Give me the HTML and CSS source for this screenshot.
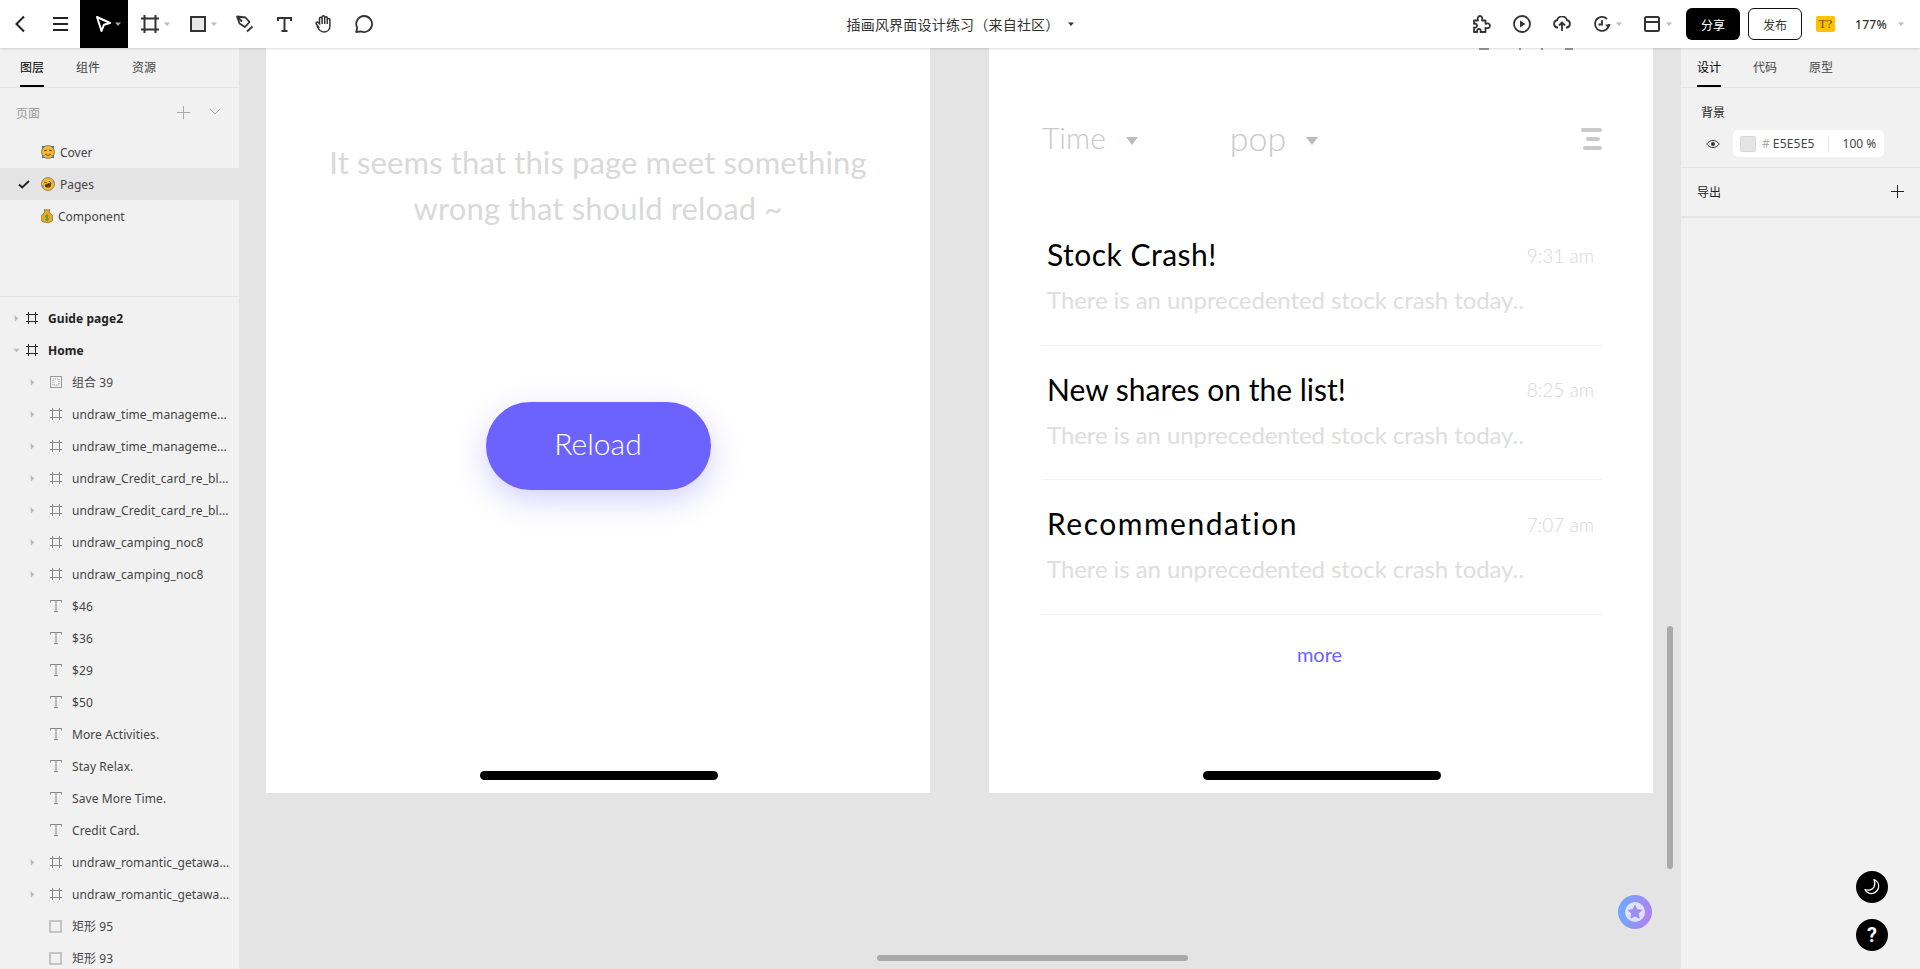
FILE: index.html
```html
<!DOCTYPE html>
<html lang="zh-CN">
<head>
<meta charset="utf-8">
<title>插画风界面设计练习</title>
<link rel="stylesheet" href="styles.css">
</head>
<body>
<svg class="defs" width="0" height="0" aria-hidden="true">
  <symbol id="frame" viewBox="0 0 12 12"><path d="M2.5 0v12M9.5 0v12M0 2.5h12M0 9.5h12" fill="none" stroke="currentColor"/></symbol>
  <symbol id="text" viewBox="0 0 12 12"><path d="M.5 2.5V.5h11v2M6 .5v11M4 11.5h4" fill="none" stroke="currentColor"/></symbol>
  <symbol id="caret" viewBox="0 0 6 6"><path d="M0 1.5h6L3 5z" fill="currentColor"/></symbol>
  <symbol id="arrow" viewBox="0 0 6 8"><path d="M1 0l4 4-4 4z" fill="currentColor"/></symbol>
</svg>
<div class="app">
  <header class="topbar">
    <div class="tools">
      <button class="tool back"><svg width="12" height="18" viewBox="0 0 12 18"><path d="M10 1.500L2.500 9l7.500 7.500" fill="none" stroke="#222" stroke-width="2"/></svg></button>
      <button class="tool menu"><svg width="15" height="14" viewBox="0 0 15 14"><path d="M0 1h15M0 7h15M0 13h15" stroke="#222" stroke-width="2"/></svg></button>
      <button class="tool select"><svg width="17" height="18" viewBox="0 0 17 18"><path d="M2 2l13 6-6 1.700L6.500 16z" fill="none" stroke="#fff" stroke-width="2" stroke-linejoin="round"/></svg><svg class="cr" width="6" height="6"><use href="#caret"/></svg></button>
      <button class="tool frame"><svg width="18" height="18" viewBox="0 0 18 18"><path d="M3.500 0v18M14.500 0v18M0 3.500h18M0 14.500h18" fill="none" stroke="#333" stroke-width="2"/></svg><svg class="cr" width="6" height="6"><use href="#caret"/></svg></button>
      <button class="tool rect"><svg width="16" height="16" viewBox="0 0 16 16"><rect x="1" y="1" width="14" height="14" fill="#e8e8e8" stroke="#333" stroke-width="2"/></svg><svg class="cr" width="6" height="6"><use href="#caret"/></svg></button>
      <button class="tool pen"><svg width="18" height="18" viewBox="0 0 18 18"><path d="M1 1.500l8.500 1 4 4.500-4.500 5-5.500-3.500zM1 1.500l5 5M11 16.500l5.500-5" fill="none" stroke="#333" stroke-width="1.800" stroke-linejoin="round"/></svg></button>
      <button class="tool type"><svg width="15" height="15" viewBox="0 0 15 15"><path d="M1 4V1h13v3M7.500 1v13M4.500 14h6" fill="none" stroke="#333" stroke-width="2"/></svg></button>
      <button class="tool hand"><svg width="18" height="18" viewBox="0 0 18 18"><path d="M3.500 12L1.300 9C.5 7.800 2 6.500 3.200 7.500L4.500 8.800V3.500c0-1.600 2.600-1.600 2.600 0V2c0-1.600 2.600-1.600 2.600 0v1c0-1.600 2.600-1.600 2.600 0v1.500c0-1.500 2.600-1.500 2.600 0V11c0 3.500-2.500 6-6 6-2.500 0-4.500-1.500-6.400-5zM7.100 3.500V9M9.700 2v7M12.300 3v6" fill="none" stroke="#333" stroke-width="1.500"/></svg></button>
      <button class="tool comment"><svg width="18" height="18" viewBox="0 0 18 18"><path d="M9 1a8 8 0 1 1-3 15.400L1.200 17l1-4.300A8 8 0 0 1 9 1z" fill="none" stroke="#333" stroke-width="1.800" stroke-linejoin="round"/></svg></button>
    </div>
    <div class="doc-title"><span>插画风界面设计练习（来自社区）</span><svg width="6" height="6"><use href="#caret"/></svg></div>
    <div class="actions">
      <svg class="act" width="18" height="18" viewBox="0 0 18 18"><path d="M1 5.500h4C4 2.500 5.500 1 7 1s3 1.500 2 4.500h3.500v3.300c2.500-1 4.500 0 4.500 2s-2 3-4.500 2V17H7.500c.8-2-.3-3-1.500-3s-2.500 1-1.700 3H1v-4.500c2 .5 3-.5 3-1.800S3 8 1 8.800z" fill="none" stroke="#333" stroke-width="1.800" stroke-linejoin="round"/></svg>
      <svg class="act" width="18" height="18" viewBox="0 0 18 18"><circle cx="9" cy="9" r="8" fill="none" stroke="#333" stroke-width="1.800"/><path d="M7 5.500l5.500 3.500L7 12.500z" fill="#333"/></svg>
      <svg class="act" width="18" height="16" viewBox="0 0 18 16"><path d="M5 11.500H4.500a3.700 3.700 0 0 1-.5-7.300 5.200 5.200 0 0 1 10 0 3.700 3.700 0 0 1-.5 7.300H13M9 15V7M6 9.500L9 6.500l3 3" fill="none" stroke="#333" stroke-width="1.800"/></svg>
      <span class="act-group"><svg width="18" height="18" viewBox="0 0 18 18"><path d="M16 9a7 7 0 1 1-2-5M9 5v4.500H5.500" fill="none" stroke="#333" stroke-width="1.800"/><path d="M12 9.500h6L15 13z" fill="#333"/></svg><svg class="cr" width="6" height="6"><use href="#caret"/></svg></span>
      <span class="act-group layout"><svg width="16" height="16" viewBox="0 0 16 16"><rect x="1" y="1" width="14" height="14" rx="1.500" fill="none" stroke="#333" stroke-width="2"/><path d="M1 6h14" stroke="#333" stroke-width="2"/></svg><svg class="cr" width="6" height="6"><use href="#caret"/></svg></span>
      <button class="btn-share">分享</button>
      <button class="btn-publish">发布</button>
      <span class="t-badge">T?</span>
      <span class="zoom-val">177%</span>
      <svg class="zoom-caret" width="6" height="6"><use href="#caret"/></svg>
    </div>
  </header>

  <div class="workspace">
    <aside class="left">
      <nav class="tabs"><span class="tab on">图层</span><span class="tab">组件</span><span class="tab">资源</span></nav>
      <div class="pages-head">
        <span>页面</span>
        <svg class="p-plus" width="13" height="13" viewBox="0 0 13 13"><path d="M6.500 0v13M0 6.500h13" stroke="#aaa"/></svg>
        <svg class="p-chev" width="12" height="7" viewBox="0 0 12 7"><path d="M1 1l5 5 5-5" fill="none" stroke="#aaa"/></svg>
      </div>
      <ul class="pages">
        <li class="page"><svg class="emoji" width="14" height="14" viewBox="0 0 14 14"><rect x="1" y="1" width="12" height="12" fill="#3b82c4"/><circle cx="7" cy="7" r="6.500" fill="#f5b82e" stroke="#555" stroke-width=".6"/><path d="M3 6l3-1M8 5l3 1M4 9q3 3 6 0" stroke="#6b4a12" fill="none"/></svg><span>Cover</span></li>
        <li class="page cur"><svg class="check" width="12" height="9" viewBox="0 0 12 9"><path d="M1 4.500L4.200 7.500 11 1" fill="none" stroke="#222" stroke-width="1.800"/></svg><svg class="emoji" width="14" height="14" viewBox="0 0 14 14"><circle cx="7" cy="7" r="6.500" fill="#f5b82e" stroke="#555" stroke-width=".6"/><path d="M3 5l3 1M8 4l2 2M4 8l6-2-1 4-4 0z" stroke="#5a3d0c" fill="#5a3d0c" stroke-width=".8"/><path d="M1 8l2 2M12 4l1 2" stroke="#3b9be0"/></svg><span>Pages</span></li>
        <li class="page comp"><svg class="emoji" width="12" height="14" viewBox="0 0 12 14"><path d="M4 3L3 .8h6L8 3c3 2 4 4 4 6.500 0 3-2.500 4-6 4s-6-1-6-4C0 7 1 5 4 3z" fill="#e7a92a" stroke="#66511b" stroke-width=".6"/><path d="M6 5.500v6M7.500 7c-1-.8-3-.5-3 .8s3 .7 3 2-2 1.500-3 .7" stroke="#2c9a3c" fill="none"/></svg><span>Component</span></li>
      </ul>
      <ul class="layers">
        <li class="layer top"><svg class="arr" width="5" height="7"><use href="#arrow"/></svg><svg class="ic" width="12" height="12"><use href="#frame"/></svg><span>Guide page2</span></li>
        <li class="layer top"><svg class="arr down" width="5" height="7"><use href="#arrow"/></svg><svg class="ic" width="12" height="12"><use href="#frame"/></svg><span>Home</span></li>
        <li class="layer"><svg class="arr" width="5" height="7"><use href="#arrow"/></svg><svg class="ic" width="12" height="12" viewBox="0 0 12 12"><rect x=".5" y=".5" width="11" height="11" fill="none" stroke="#999"/><rect x="3" y="3" width="6" height="6" fill="none" stroke="#999" stroke-dasharray="1 1"/></svg><span>组合 39</span></li>
        <li class="layer"><svg class="arr" width="5" height="7"><use href="#arrow"/></svg><svg class="ic" width="12" height="12"><use href="#frame"/></svg><span>undraw_time_manageme...</span></li>
        <li class="layer"><svg class="arr" width="5" height="7"><use href="#arrow"/></svg><svg class="ic" width="12" height="12"><use href="#frame"/></svg><span>undraw_time_manageme...</span></li>
        <li class="layer"><svg class="arr" width="5" height="7"><use href="#arrow"/></svg><svg class="ic" width="12" height="12"><use href="#frame"/></svg><span>undraw_Credit_card_re_bl...</span></li>
        <li class="layer"><svg class="arr" width="5" height="7"><use href="#arrow"/></svg><svg class="ic" width="12" height="12"><use href="#frame"/></svg><span>undraw_Credit_card_re_bl...</span></li>
        <li class="layer"><svg class="arr" width="5" height="7"><use href="#arrow"/></svg><svg class="ic" width="12" height="12"><use href="#frame"/></svg><span>undraw_camping_noc8</span></li>
        <li class="layer"><svg class="arr" width="5" height="7"><use href="#arrow"/></svg><svg class="ic" width="12" height="12"><use href="#frame"/></svg><span>undraw_camping_noc8</span></li>
        <li class="layer"><i class="arr"></i><svg class="ic" width="12" height="12"><use href="#text"/></svg><span>$46</span></li>
        <li class="layer"><i class="arr"></i><svg class="ic" width="12" height="12"><use href="#text"/></svg><span>$36</span></li>
        <li class="layer"><i class="arr"></i><svg class="ic" width="12" height="12"><use href="#text"/></svg><span>$29</span></li>
        <li class="layer"><i class="arr"></i><svg class="ic" width="12" height="12"><use href="#text"/></svg><span>$50</span></li>
        <li class="layer"><i class="arr"></i><svg class="ic" width="12" height="12"><use href="#text"/></svg><span>More Activities.</span></li>
        <li class="layer"><i class="arr"></i><svg class="ic" width="12" height="12"><use href="#text"/></svg><span>Stay Relax.</span></li>
        <li class="layer"><i class="arr"></i><svg class="ic" width="12" height="12"><use href="#text"/></svg><span>Save More Time.</span></li>
        <li class="layer"><i class="arr"></i><svg class="ic" width="12" height="12"><use href="#text"/></svg><span>Credit Card.</span></li>
        <li class="layer"><svg class="arr" width="5" height="7"><use href="#arrow"/></svg><svg class="ic" width="12" height="12"><use href="#frame"/></svg><span>undraw_romantic_getawa...</span></li>
        <li class="layer"><svg class="arr" width="5" height="7"><use href="#arrow"/></svg><svg class="ic" width="12" height="12"><use href="#frame"/></svg><span>undraw_romantic_getawa...</span></li>
        <li class="layer"><i class="arr"></i><i class="ic box"></i><span>矩形 95</span></li>
        <li class="layer"><i class="arr"></i><i class="ic box"></i><span>矩形 93</span></li>
      </ul>
    </aside>

    <main class="canvas">
      <section class="board">
        <p class="err">It seems that this page meet something<br>wrong that should reload ~</p>
        <button class="reload">Reload</button>
        <div class="home-bar"></div>
      </section>
      <section class="board news">
        <div class="status-bits"><i></i><i></i><i></i><i></i></div>
        <div class="filters">
          <span class="f-time">Time</span><i class="tri"></i>
          <span class="f-pop">pop</span><i class="tri"></i>
          <span class="f-menu"><i></i><i></i><i></i></span>
        </div>
        <ul class="feed">
          <li class="item"><div class="item-top"><h3 class="t-stock">Stock Crash!</h3><time>9:31 am</time></div><p>There is an unprecedented stock crash today..</p></li>
          <li class="item"><div class="item-top"><h3>New shares on the list!</h3><time>8:25 am</time></div><p>There is an unprecedented stock crash today..</p></li>
          <li class="item"><div class="item-top"><h3 class="t-rec">Recommendation</h3><time>7:07 am</time></div><p>There is an unprecedented stock crash today..</p></li>
        </ul>
        <a class="more">more</a>
        <div class="home-bar"></div>
      </section>
      <div class="vscroll"></div>
      <div class="hscroll"></div>
      <div class="star"><svg width="20" height="20" viewBox="0 0 20 20"><circle cx="10" cy="10" r="10" fill="#fff" fill-opacity=".72"/><path d="M10 3.500l2 4.200 4.600.6-3.300 3.200.8 4.600L10 13.900l-4.100 2.200.8-4.600L3.400 8.300 8 7.700z" fill="#9b8cf8" stroke="#9b8cf8" stroke-linejoin="round"/></svg></div>
    </main>

    <aside class="right">
      <nav class="tabs rtabs"><span class="tab on">设计</span><span class="tab">代码</span><span class="tab">原型</span></nav>
      <section class="bg-sec">
        <h4>背景</h4>
        <div class="fill-row">
          <svg width="14" height="10" viewBox="0 0 14 10"><path d="M.7 5C4 .3 10 .3 13.300 5 10 9.700 4 9.700 .7 5z" fill="none" stroke="#333"/><circle cx="7" cy="5" r="2" fill="#333"/></svg>
          <div class="fill-input">
            <i class="swatch"></i><span class="hash">#</span><span class="hex">E5E5E5</span><i class="sep"></i><span class="pct">100 %</span>
          </div>
        </div>
      </section>
      <section class="export">
        <h4>导出</h4>
        <svg width="13" height="13" viewBox="0 0 13 13"><path d="M6.500 0v13M0 6.500h13" stroke="#222"/></svg>
      </section>
      <div class="fab-stack">
        <button class="fab"><svg width="18" height="18" viewBox="0 0 18 18"><path d="M11 1.500c3.500 1.500 5.500 5 4.500 8.500-1.200 4-5.500 6.500-9.500 5.200-2-.7-3.500-2-4-3.700 3.500 1.500 7.500.3 9-2.500 1.200-2.500 1-5.200 0-7.500z" fill="none" stroke="#fff" stroke-width="1.300" stroke-linejoin="round"/></svg></button>
        <button class="fab q">?</button>
      </div>
    </aside>
  </div>
</div>
</body>
</html>
```

FILE: styles.css
```css
* { box-sizing: border-box; }
html, body { margin: 0; height: 100%; overflow: hidden; }
body { font-family: "Noto Sans", "Noto Sans CJK SC", sans-serif; font-size: 12px; color: #333; }
ul { list-style: none; margin: 0; padding: 0; }
h3, h4, p { margin: 0; font-weight: 400; }
button { border: 0; background: none; padding: 0; font: inherit; }
.defs { position: absolute; }
.app { display: flex; flex-direction: column; height: 969px; width: 1920px; }

.topbar { position: relative; z-index: 2; flex: 0 0 48px; display: grid; grid-template-columns: 1fr auto 1fr; align-items: center; background: #fff; box-shadow: 0 1px 2px rgba(0,0,0,.14); }
.tools { display: flex; align-items: center; height: 48px; }
.tool { display: flex; align-items: center; height: 48px; color: #c4c4c4; flex: none; }
.cr { margin-left: 5px; color: #bbb; }
.back { padding-left: 14px; width: 53px; }
.menu { width: 27px; }
.select { width: 48px; background: #000; padding-left: 15px; }
.select .cr { margin-left: 3px; color: #aaa; }
.frame { margin-left: 13px; width: 49px; }
.rect { width: 46px; }
.pen { width: 41px; }
.type { width: 38px; }
.hand { width: 40px; }
.doc-title { display: flex; align-items: center; gap: 8px; color: #333; font-family: "Noto Sans CJK SC", sans-serif; font-size: 14px; letter-spacing: .2px; }
.actions { display: flex; align-items: center; justify-content: flex-end; }
.actions .act { margin-right: 22px; flex: none; }
.act-group { display: flex; align-items: center; margin-right: 22px; color: #bbb; }
.act-group.layout { margin-right: 14px; }
.act-group.layout .cr { margin-left: 6px; }
.btn-share, .btn-publish { width: 54px; height: 32px; border-radius: 6px; font-family: "Noto Sans CJK SC", sans-serif; font-size: 12px; }
.btn-share { background: #000; color: #fff; }
.btn-publish { margin-left: 8px; border: 1px solid #111; color: #333; }
.t-badge { margin-left: 14px; width: 19px; height: 16px; border-radius: 2px; background: #fdc100; color: #6b5200; font: 13px/16px "Liberation Serif", serif; text-align: center; }
.zoom-val { margin-left: 20px; color: #333; font-size: 12px; font-weight: 500; letter-spacing: .3px; }
.zoom-caret { margin: 0 16px 0 11px; color: #bbb; }

.workspace { flex: 1; display: flex; min-height: 0; }
.left, .right { flex: none; background: #f1f1f1; overflow: hidden; }
.left { width: 239px; }
.right { position: relative; width: 239px; }
.tabs { display: flex; gap: 32px; height: 40px; padding: 0 20px; border-bottom: 1px solid #e3e3e3; font-family: "Noto Sans CJK SC", sans-serif; }
.tab { position: relative; height: 39px; line-height: 37px; color: #444; width: 24px; white-space: nowrap; }
.tab.on { color: #000; border-bottom: 2px solid #000; }
.rtabs { padding-left: 16px; }
.pages-head { position: relative; display: flex; align-items: center; height: 48px; padding: 0 16px; color: #999; font-family: "Noto Sans CJK SC", sans-serif; }
.p-plus { position: absolute; left: 177px; top: 18px; }
.p-chev { position: absolute; left: 209px; top: 20px; }
.pages { height: 161px; border-bottom: 1px solid #e3e3e3; }
.page { position: relative; display: flex; align-items: center; height: 32px; padding-left: 41px; color: #444; }
.page span { margin-left: 5px; }
.page.cur { background: #e4e4e4; }
.check { position: absolute; left: 18px; top: 12px; }
.layers { padding-top: 5px; }
.layer { display: flex; align-items: center; height: 32px; padding-left: 30px; color: #444; white-space: nowrap; letter-spacing: .08px; }
.arr { flex: none; width: 5px; height: 7px; color: #bbb; }
.arr.down { transform: rotate(90deg); }
.ic { flex: none; width: 12px; height: 12px; margin-left: 15px; margin-right: 10px; color: #888; }
.box { width: 13px; height: 13px; border: 2px solid #c4c4c4; margin-left: 14px; }
.layer.top { padding-left: 14px; font-weight: 700; color: #222; }
.layer.top .ic { margin-left: 7px; color: #222; }

.canvas { position: relative; flex: 1; min-width: 0; display: flex; align-items: flex-start; gap: 59px; padding-left: 27px; background: #e4e4e4; overflow: hidden; }
.board { position: relative; flex: 0 0 664px; height: 745px; display: flex; flex-direction: column; align-items: center; background: #fff; font-family: Lato, sans-serif; font-weight: 300; }
.err { margin-top: 91px; font-size: 31px; line-height: 46px; color: #d9d9d9; text-align: center; letter-spacing: .13px; }
.reload { margin-top: 171px; width: 225px; height: 88px; padding-bottom: 6px; border-radius: 44px; background: #6c63ff; color: #fff; font-family: Lato, sans-serif; font-weight: 300; font-size: 30px; box-shadow: 0 10px 30px rgba(108,99,255,.3); }
.home-bar { position: absolute; bottom: 13px; left: 214px; width: 238px; height: 9px; border-radius: 5px; background: #000; }
.news { align-items: stretch; padding-left: 53px; padding-right: 51px; }
.status-bits { display: flex; height: 3px; padding-left: 437px; }
.status-bits i { height: 2px; background: #999; }
.status-bits i:nth-child(1) { width: 10px; }
.status-bits i:nth-child(2) { width: 2px; margin-left: 30px; }
.status-bits i:nth-child(3) { width: 2px; margin-left: 20px; }
.status-bits i:nth-child(4) { width: 8px; margin-left: 22px; }
.filters { display: flex; align-items: center; height: 40px; margin-top: 68px; font-size: 30px; color: #c9c9c9; }
.f-time, .f-pop { margin-top: -4px; }
.f-pop { margin-left: 92px; font-size: 34px; }
.tri { width: 0; height: 0; margin-top: 4px; margin-left: 20px; border: 6px solid transparent; border-top: 8px solid #bbb; border-bottom: 0; }
.f-menu { margin-left: auto; display: flex; flex-direction: column; align-items: flex-end; gap: 5px; }
.f-menu i { height: 4px; width: 19px; border-radius: 2px; background: #c9c9c9; }
.f-menu i:nth-child(1) { width: 21px; align-self: flex-start; }
.f-menu i:nth-child(2) { width: 14px; margin-right: 2px; }
.feed { margin-top: 52px; }
.item { padding: 24px 8px 29.5px 5px; border-bottom: 1px solid #f3f3f3; }
.item-top { display: flex; align-items: center; justify-content: space-between; height: 40px; }
.item h3 { margin-top: -2px; font-size: 30px; color: #000; font-weight: 400; }
.item h3.t-stock { letter-spacing: .5px; }
.item h3.t-rec { letter-spacing: 1.5px; }
.item time { font-size: 19px; color: #d8d8d8; }
.item p { margin-top: 10px; font-size: 24px; line-height: 30px; color: #dedede; letter-spacing: -.08px; }
.more { margin-top: 24px; margin-right: 5px; text-align: center; font-size: 20px; line-height: 30px; color: #6c63ff; font-weight: 400; }

.vscroll { position: absolute; left: 1428px; top: 578px; width: 6px; height: 243px; border-radius: 3px; background: #a9a9a9; }
.hscroll { position: absolute; left: 638px; bottom: 8px; width: 311px; height: 6px; border-radius: 3px; background: #a9a9a9; }
.star { position: absolute; left: 1379px; top: 847px; width: 34px; height: 34px; display: flex; align-items: center; justify-content: center; border-radius: 50%; background: linear-gradient(100deg, #66aefc, #b77ef0); }

.bg-sec { height: 80px; padding: 15px 0 0 20px; border-bottom: 1px solid #e3e3e3; }
.bg-sec h4, .export h4 { font-family: "Noto Sans CJK SC", sans-serif; font-size: 12px; line-height: 17px; color: #222; }
.fill-row { display: flex; align-items: center; gap: 13px; margin-top: 10px; padding-left: 5px; }
.fill-input { display: flex; align-items: center; width: 151px; height: 27px; padding-left: 7px; border-radius: 5px; background: #fff; color: #444; font-size: 12px; }
.swatch { width: 16px; height: 16px; border: 1px solid #d6d6d6; border-radius: 2px; background: #e5e5e5; }
.hash { margin-left: 6px; color: #aaa; }
.hex { margin-left: 3px; letter-spacing: .2px; }
.sep { width: 1px; height: 16px; margin-left: 13px; background: #e3e3e3; }
.pct { margin-left: 14px; }
.export { display: flex; align-items: center; justify-content: space-between; height: 50px; padding: 0 16px 2px; border-bottom: 2px solid #e6e6e6; }
.fab-stack { position: absolute; right: 32px; bottom: 18px; display: flex; flex-direction: column; gap: 16px; }
.fab { width: 32px; height: 32px; display: flex; align-items: center; justify-content: center; border-radius: 50%; background: #000; color: #fff; }
.fab.q { font-family: Roboto, sans-serif; font-size: 20px; font-weight: 700; }
```
